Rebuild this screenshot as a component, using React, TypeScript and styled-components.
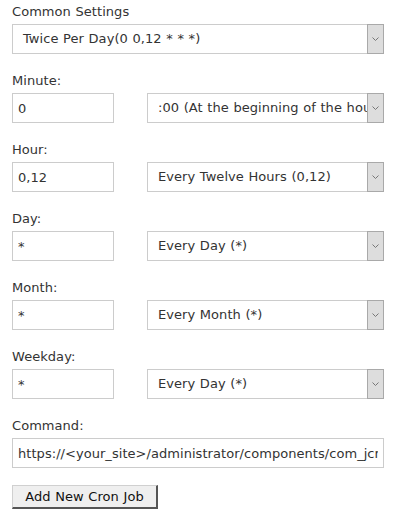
import React from 'react';
import styled, { createGlobalStyle } from 'styled-components';

const GlobalStyle = createGlobalStyle`
  html, body {
    margin: 0;
    padding: 0;
    background: #ffffff;
  }
  body {
    font-family: "DejaVu Sans", Verdana, sans-serif;
    font-size: 13px;
    word-spacing: 0.45px;
    letter-spacing: 0.05px;
    color: #333333;
  }
`;

const Form = styled.form`
  width: 372px;
  padding: 3px 0 0 12px;
  display: flex;
  flex-direction: column;
`;

const Field = styled.div`
  display: flex;
  flex-direction: column;
  margin-bottom: 18px;
`;

const Label = styled.label`
  display: block;
  height: 21px;
  line-height: 18px;
  color: #333333;
`;

const Row = styled.div`
  display: flex;
  align-items: center;
  gap: 33px;
`;

const TextInput = styled.input<{ $wide?: boolean }>`
  box-sizing: border-box;
  width: ${(p) => (p.$wide ? '372px' : '102px')};
  height: 30px;
  margin: 0;
  padding: 0 5px;
  border: 1px solid #cccccc;
  border-radius: 0;
  font: inherit;
  word-spacing: inherit;
  letter-spacing: inherit;
  color: #333333;
  background: #ffffff;
  outline: none;
`;

const SelectBox = styled.div<{ $wide?: boolean }>`
  box-sizing: border-box;
  width: ${(p) => (p.$wide ? '372px' : '237px')};
  height: 30px;
  display: flex;
  align-items: stretch;
  border: 1px solid #cccccc;
  background: #ffffff;
`;

const SelectValue = styled.span`
  flex: 1;
  min-width: 0;
  overflow: hidden;
  white-space: nowrap;
  padding-left: 10px;
  line-height: 28px;
  color: #333333;
`;

const ArrowBox = styled.span`
  box-sizing: border-box;
  width: 17px;
  margin: -1px -1px -1px 0;
  border: 1px solid #a9a9a9;
  background: #dddddd;
  display: flex;
  align-items: center;
  justify-content: center;
`;

const Button = styled.button`
  align-self: flex-start;
  box-sizing: border-box;
  width: 146px;
  height: 24px;
  margin-top: -1px;
  padding: 0;
  font: inherit;
  word-spacing: inherit;
  letter-spacing: inherit;
  color: #111111;
  background: #efefef;
  border-style: solid;
  border-width: 1px 2px 2px 1px;
  border-color: #d0d0d0 #555555 #555555 #d0d0d0;
  border-radius: 0;
`;

const Chevron = () => (
  <svg width="7" height="4" viewBox="0 0 7 4">
    <path d="M0.5 0.5 L3.5 3.5 L6.5 0.5" fill="none" stroke="#777777" strokeWidth="1" />
  </svg>
);

const Select: React.FC<{ value: string; wide?: boolean }> = ({ value, wide }) => (
  <SelectBox $wide={wide}>
    <SelectValue>{value}</SelectValue>
    <ArrowBox>
      <Chevron />
    </ArrowBox>
  </SelectBox>
);

const fields = [
  { label: 'Minute:', value: '0', option: ':00 (At the beginning of the hour)' },
  { label: 'Hour:', value: '0,12', option: 'Every Twelve Hours (0,12)' },
  { label: 'Day:', value: '*', option: 'Every Day (*)' },
  { label: 'Month:', value: '*', option: 'Every Month (*)' },
  { label: 'Weekday:', value: '*', option: 'Every Day (*)' },
];

const App: React.FC = () => {
  return (
    <>
      <GlobalStyle />
      <Form onSubmit={(e) => e.preventDefault()}>
        <Field>
          <Label>Common Settings</Label>
          <Select wide value="Twice Per Day(0 0,12 * * *)" />
        </Field>
        {fields.map((f) => (
          <Field key={f.label}>
            <Label>{f.label}</Label>
            <Row>
              <TextInput defaultValue={f.value} />
              <Select value={f.option} />
            </Row>
          </Field>
        ))}
        <Field>
          <Label>Command:</Label>
          <TextInput
            $wide
            defaultValue="https://<your_site>/administrator/components/com_jcron/cron.php"
          />
        </Field>
        <Button type="button">Add New Cron Job</Button>
      </Form>
    </>
  );
};

export default App;
